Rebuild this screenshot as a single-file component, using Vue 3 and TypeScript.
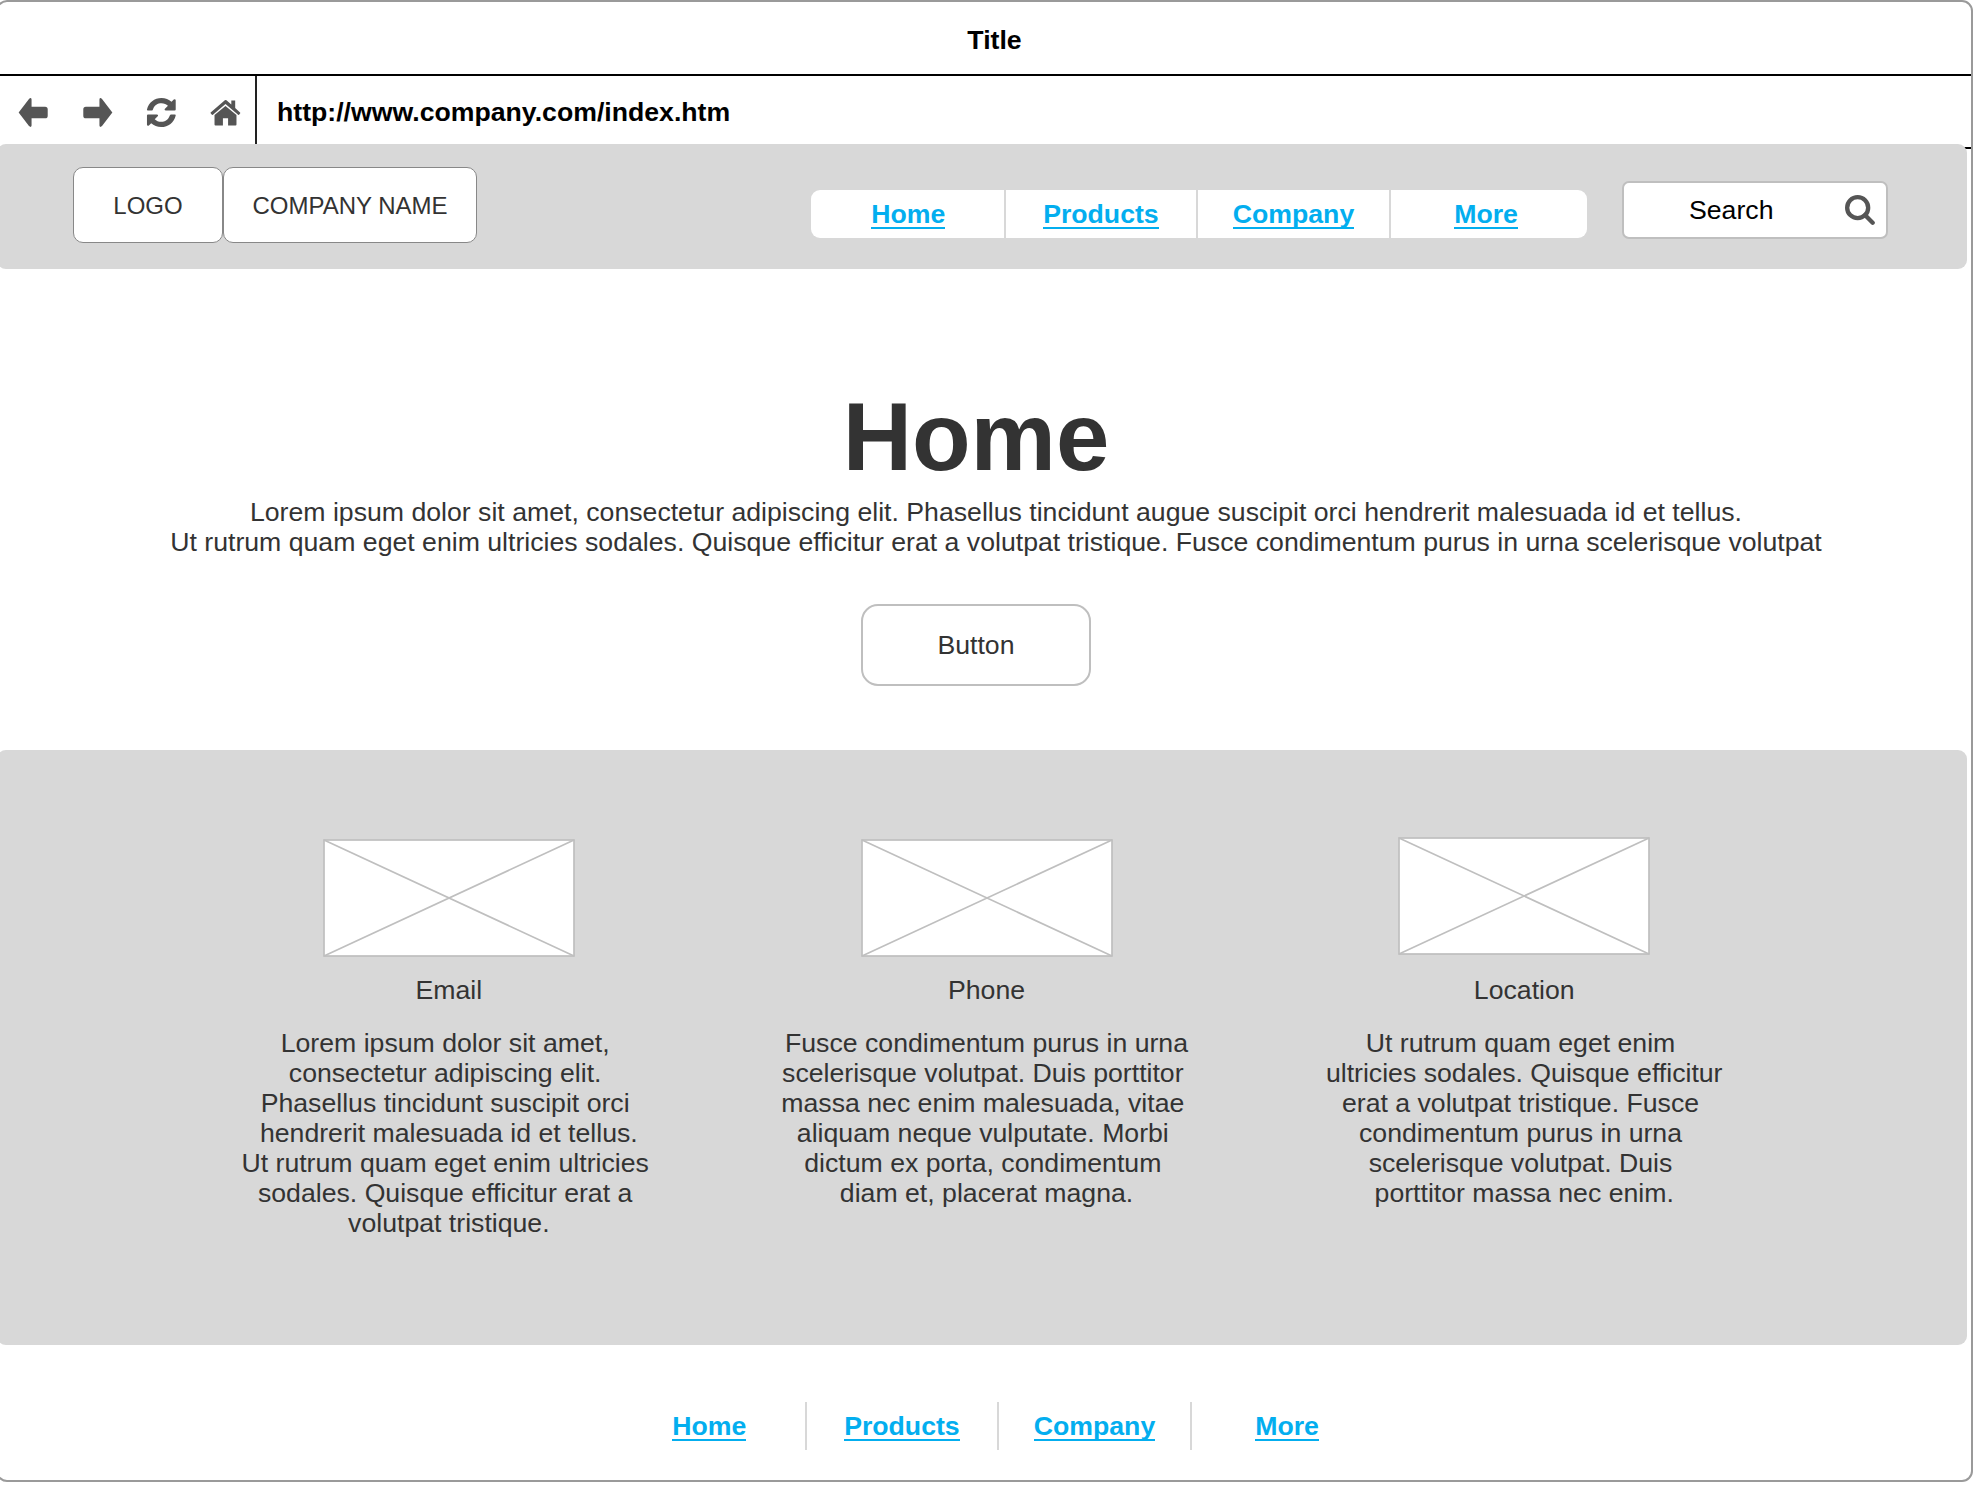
<script setup lang="ts">
interface Feature {
  title: string
  lines: string[]
  raised?: boolean
}

const links: string[] = ['Home', 'Products', 'Company', 'More']

const intro: string = [
  'Lorem ipsum dolor sit amet, consectetur adipiscing elit. Phasellus tincidunt augue suscipit orci hendrerit malesuada id et tellus.',
  'Ut rutrum quam eget enim ultricies sodales. Quisque efficitur erat a volutpat tristique. Fusce condimentum purus in urna scelerisque volutpat',
].join('\n')

const features: Feature[] = [
  {
    title: 'Email',
    lines: [
      'Lorem ipsum dolor sit amet, ',
      'consectetur adipiscing elit. ',
      'Phasellus tincidunt suscipit orci ',
      'hendrerit malesuada id et tellus.',
      'Ut rutrum quam eget enim ultricies ',
      'sodales. Quisque efficitur erat a ',
      'volutpat tristique.',
    ],
  },
  {
    title: 'Phone',
    lines: [
      'Fusce condimentum purus in urna',
      'scelerisque volutpat. Duis porttitor ',
      'massa nec enim malesuada, vitae ',
      'aliquam neque vulputate. Morbi ',
      'dictum ex porta, condimentum ',
      'diam et, placerat magna.',
    ],
  },
  {
    title: 'Location',
    raised: true,
    lines: [
      'Ut rutrum quam eget enim ',
      'ultricies sodales. Quisque efficitur',
      'erat a volutpat tristique. Fusce ',
      'condimentum purus in urna ',
      'scelerisque volutpat. Duis ',
      'porttitor massa nec enim.',
    ],
  },
]
</script>

<template>
  <div class="window">
    <div class="titlebar">Title</div>
    <div class="toolbar">
      <div class="controls">
        <svg class="icon" viewBox="0 0 96 96">
          <path d="M2 48 34 6q7-6 8 2v22h42q8 0 8 8v20q0 8-8 8H42v22q-1 8-8 2Z" />
        </svg>
        <svg class="icon" viewBox="0 0 96 96">
          <path d="M94 48 62 6q-7-6-8 2v22H12q-8 0-8 8v20q0 8 8 8h42v22q1 8 8 2Z" />
        </svg>
        <svg class="icon" viewBox="0 0 96 96">
          <path d="M3 39C8 17 26 3 48 3c12 0 23 5 31 12l7-7q5-3 6 2v29q0 3-3 3H61q-5-1-3-5l10-10c-5-5-12-8-20-8-12 0-22 6-26 18q-1 5-4 5H6q-4 0-3-3Z" />
          <path d="M92 57C87 79 69 93 47 93c-12 0-23-5-31-12l-7 7q-5 3-6-2V57q0-3 3-3h28q5 1 3 5L27 69c5 5 12 8 20 8 12 0 22-6 26-18q1-5 4-5h12q4 0 3 3Z" />
        </svg>
        <svg class="icon" viewBox="0 0 96 96">
          <path d="M2 48 46 10q2-2 5 0L66 23V11h12v23l15 14q2 2 0 3l-3 4q-1 1-3 0L48 22 9 55q-2 1-3 0l-4-5q-1-1 0-2Z" />
          <path d="M14 56 48 28l34 28v29q0 3-3 3H56V66H40v22H17q-3 0-3-3Z" />
        </svg>
      </div>
      <div class="address">http://www.company.com/index.htm</div>
    </div>

    <header class="header">
      <div class="brand logo">LOGO</div>
      <div class="brand company">COMPANY NAME</div>
      <nav class="nav main-nav">
        <a v-for="link in links" :key="link" class="cell"><span>{{ link }}</span></a>
      </nav>
      <div class="search">
        <span>Search</span>
        <svg class="magnifier" viewBox="0 0 90 90">
          <circle cx="38" cy="38" r="31.5" />
          <path d="M60 60 83 83" />
        </svg>
      </div>
    </header>

    <section class="hero">
      <h1>Home</h1>
      <p>{{ intro }}</p>
      <button type="button">Button</button>
    </section>

    <section class="features">
      <article v-for="f in features" :key="f.title" class="feature">
        <svg class="placeholder" :class="{ raised: f.raised }" viewBox="0 0 252 118">
          <rect x="1" y="1" width="250" height="116" />
          <path d="M1 1 251 117M251 1 1 117" />
        </svg>
        <h2>{{ f.title }}</h2>
        <p>{{ f.lines.join('\n') }}</p>
      </article>
    </section>

    <nav class="nav footer-nav">
      <a v-for="link in links" :key="link" class="cell"><span>{{ link }}</span></a>
    </nav>
  </div>
</template>

<style>
body {
  margin: 0;
  background: #fff;
  overflow: hidden;
}
</style>

<style scoped>
.window {
  box-sizing: border-box;
  width: 1977px;
  height: 1482px;
  margin-left: -4px;
  border: 2px solid #9a9a9a;
  border-radius: 11px;
  background: #fff;
  color: #333;
  font-family: 'Liberation Sans', Arial, sans-serif;
  font-size: 26.67px;
  line-height: 30px;
}

.titlebar {
  height: 72px;
  padding-left: 20px;
  border-bottom: 2px solid #000;
  color: #000;
  font-weight: bold;
  line-height: 77px;
  text-align: center;
}

.toolbar {
  display: flex;
  height: 71px;
  border-bottom: 2px solid #000;
  color: #000;
  font-weight: bold;
}

.controls {
  box-sizing: border-box;
  display: flex;
  gap: 33px;
  width: 259px;
  padding: 21px 0 0 20px;
  border-right: 2px solid #222;
}

.icon {
  width: 31px;
  height: 31px;
  fill: #555;
}

.address {
  padding: 21px 0 0 20px;
}

.header {
  position: relative;
  box-sizing: border-box;
  display: flex;
  align-items: flex-start;
  width: 1970px;
  height: 125px;
  margin: -5px 0 0 -1px;
  padding-left: 76px;
  border-radius: 9px;
  background: #d8d8d8;
}

.brand {
  box-sizing: border-box;
  height: 76px;
  margin-top: 23px;
  border: 1px solid #888;
  border-radius: 10px;
  background: #fff;
  font-size: 24px;
  line-height: 76px;
  text-align: center;
}

.logo {
  width: 150px;
}

.company {
  width: 254px;
}

.nav {
  display: flex;
  font-weight: bold;
  text-align: center;
}

.cell {
  box-sizing: border-box;
  width: 192.6px;
  border-right: 2px solid #d8d8d8;
  color: #03aeef;
}

.cell:last-child {
  border-right-color: transparent;
}

.cell span {
  border-bottom: 2px solid #03aeef;
  display: inline-block;
  line-height: 25px;
}

.main-nav {
  box-sizing: border-box;
  width: 776px;
  height: 48px;
  margin: 46px 0 0 334px;
  padding-left: 2px;
  border-radius: 9px;
  background: #fff;
}

.main-nav .cell {
  padding-top: 9px;
}

.search {
  box-sizing: border-box;
  display: flex;
  justify-content: space-between;
  width: 266px;
  height: 58px;
  margin: 37px 0 0 35px;
  padding: 12px 11px 0 65px;
  border: 2px solid #bfbfbf;
  border-radius: 7px;
  background: #fff;
  color: #000;
}

.magnifier {
  width: 30px;
  height: 30px;
  fill: none;
  stroke: #555;
  stroke-width: 13;
  stroke-linecap: round;
}

.hero {
  display: flex;
  flex-direction: column;
  align-items: center;
  height: 481px;
  padding-right: 17px;
}

h1 {
  margin: 118px 0 0;
  font-size: 96px;
  line-height: 99px;
}

.hero p {
  margin: 11px 0 0;
  padding-left: 40px;
  white-space: pre;
  text-align: center;
}

button {
  box-sizing: border-box;
  width: 230px;
  height: 82px;
  margin-top: 47px;
  border: 2px solid #bfbfbf;
  border-radius: 17px;
  background: #fff;
  color: inherit;
  font: inherit;
}

.features {
  box-sizing: border-box;
  display: flex;
  gap: 118px;
  width: 1970px;
  height: 595px;
  margin-left: -1px;
  padding: 89px 0 0 242px;
  border-radius: 9px;
  background: #d8d8d8;
}

.feature {
  display: flex;
  flex-direction: column;
  align-items: center;
  width: 419.7px;
}

.placeholder {
  width: 252px;
  height: 118px;
  fill: #fff;
  stroke: #bfbfbf;
  stroke-width: 1.7;
}

.raised {
  transform: translateY(-2px);
}

h2 {
  margin: 18px 0 0;
  font-size: inherit;
  font-weight: normal;
}

.feature p {
  margin: 23px 0 0;
  white-space: pre;
  text-align: center;
}

.footer-nav {
  margin: 57px 0 0 616px;
}

.footer-nav .cell {
  height: 48px;
  padding-top: 9px;
}
</style>
